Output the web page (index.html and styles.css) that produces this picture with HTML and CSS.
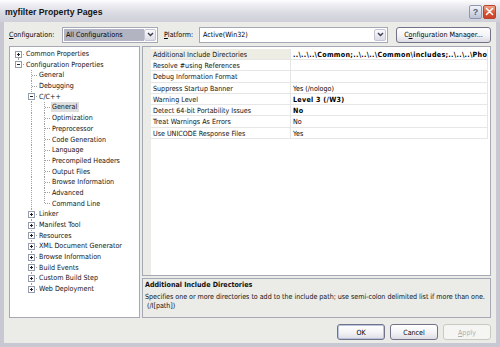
FILE: index.html
```html
<!DOCTYPE html>
<html lang="en">
<head>
    <meta charset="UTF-8">
    <title>myfilter Property Pages</title>
    <link rel="stylesheet" href="styles.css">
</head>
<body>
    <div class="window">
        <div class="titlebar">
            <span class="title">myfilter Property Pages</span>
            <span class="cap help">?</span>
            <span class="cap close">
                <svg width="9" height="9" viewBox="0 0 9 9"><path d="M1.5 1.5 L7.5 7.5 M7.5 1.5 L1.5 7.5" stroke="#fff" stroke-width="1.6" stroke-linecap="round"/></svg>
            </span>
        </div>

        <div class="body">
            <div class="toolbar">
                <span class="lbl"><u>C</u>onfiguration:</span>
                <div class="combo cfg">
                    <span class="text">All Configurations</span>
                    <span class="drop"><svg width="7" height="5" viewBox="0 0 7 5"><path d="M1 1 L3.5 3.5 L6 1" fill="none" stroke="#3c3c50" stroke-width="1.4"/></svg></span>
                </div>
                <span class="lbl plat"><u>P</u>latform:</span>
                <div class="combo platform">
                    <span class="text">Active(Win32)</span>
                    <span class="drop"><svg width="7" height="5" viewBox="0 0 7 5"><path d="M1 1 L3.5 3.5 L6 1" fill="none" stroke="#3c3c50" stroke-width="1.4"/></svg></span>
                </div>
                <button class="btn mgr">C<u>o</u>nfiguration Manager...</button>
            </div>

            <div class="main">
                <!-- tree of property pages -->
                <div class="tree">
                    <div class="row"><span class="node first"><span class="exp plus"></span></span><span class="label">Common Properties</span></div>
                    <div class="row"><span class="node last"><span class="exp minus"></span></span><span class="label">Configuration Properties</span></div>
                    <div class="row"><span class="gap"></span><span class="node"></span><span class="label">General</span></div>
                    <div class="row"><span class="gap"></span><span class="node"></span><span class="label">Debugging</span></div>
                    <div class="row"><span class="gap"></span><span class="node"><span class="exp minus"></span></span><span class="label">C/C++</span></div>
                    <div class="row"><span class="gap"></span><span class="pipe"></span><span class="node"></span><span class="label selected">General</span></div>
                    <div class="row"><span class="gap"></span><span class="pipe"></span><span class="node"></span><span class="label">Optimization</span></div>
                    <div class="row"><span class="gap"></span><span class="pipe"></span><span class="node"></span><span class="label">Preprocessor</span></div>
                    <div class="row"><span class="gap"></span><span class="pipe"></span><span class="node"></span><span class="label">Code Generation</span></div>
                    <div class="row"><span class="gap"></span><span class="pipe"></span><span class="node"></span><span class="label">Language</span></div>
                    <div class="row"><span class="gap"></span><span class="pipe"></span><span class="node"></span><span class="label">Precompiled Headers</span></div>
                    <div class="row"><span class="gap"></span><span class="pipe"></span><span class="node"></span><span class="label">Output Files</span></div>
                    <div class="row"><span class="gap"></span><span class="pipe"></span><span class="node"></span><span class="label">Browse Information</span></div>
                    <div class="row"><span class="gap"></span><span class="pipe"></span><span class="node"></span><span class="label">Advanced</span></div>
                    <div class="row"><span class="gap"></span><span class="pipe"></span><span class="node last"></span><span class="label">Command Line</span></div>
                    <div class="row"><span class="gap"></span><span class="node"><span class="exp plus"></span></span><span class="label">Linker</span></div>
                    <div class="row"><span class="gap"></span><span class="node"><span class="exp plus"></span></span><span class="label">Manifest Tool</span></div>
                    <div class="row"><span class="gap"></span><span class="node"><span class="exp plus"></span></span><span class="label">Resources</span></div>
                    <div class="row"><span class="gap"></span><span class="node"><span class="exp plus"></span></span><span class="label">XML Document Generator</span></div>
                    <div class="row"><span class="gap"></span><span class="node"><span class="exp plus"></span></span><span class="label">Browse Information</span></div>
                    <div class="row"><span class="gap"></span><span class="node"><span class="exp plus"></span></span><span class="label">Build Events</span></div>
                    <div class="row"><span class="gap"></span><span class="node"><span class="exp plus"></span></span><span class="label">Custom Build Step</span></div>
                    <div class="row"><span class="gap"></span><span class="node last"><span class="exp plus"></span></span><span class="label">Web Deployment</span></div>
                </div>

                <div class="right">
                    <!-- property grid -->
                    <div class="grid">
                        <div class="gutter"></div>
                        <div class="props">
                            <div class="prop"><span class="name active">Additional Include Directories</span><span class="val bold">..\..\..\Common;..\..\..\Common\includes;..\..\..\Pho</span></div>
                            <div class="prop"><span class="name">Resolve #using References</span><span class="val"></span></div>
                            <div class="prop"><span class="name">Debug Information Format</span><span class="val"></span></div>
                            <div class="prop"><span class="name">Suppress Startup Banner</span><span class="val">Yes (/nologo)</span></div>
                            <div class="prop"><span class="name">Warning Level</span><span class="val bold">Level 3 (/W3)</span></div>
                            <div class="prop"><span class="name">Detect 64-bit Portability Issues</span><span class="val bold">No</span></div>
                            <div class="prop"><span class="name">Treat Warnings As Errors</span><span class="val">No</span></div>
                            <div class="prop"><span class="name">Use UNICODE Response Files</span><span class="val">Yes</span></div>
                        </div>
                    </div>

                    <div class="desc">
                        <div class="desc-title">Additional Include Directories</div>
                        <div class="desc-text">Specifies one or more directories to add to the include path; use semi-colon delimited list if more than one.<br>&nbsp;(/I[path])</div>
                    </div>
                </div>
            </div>

            <div class="footer">
                <button class="btn default">OK</button>
                <button class="btn">Cancel</button>
                <button class="btn" disabled><u>A</u>pply</button>
            </div>
        </div>
    </div>
</body>
</html>
```

FILE: styles.css
```css
:root {
    --face: #ebebe8;
    --frame: #c8c8d3;
    --edge: #a5a9b5;
    --line: #a0a0a0;
    --grid-line: #e6e6e6;
}

* {
    box-sizing: border-box;
}

body {
    margin: 0;
    font-family: "DejaVu Sans Condensed", "Liberation Sans", sans-serif;
    font-size: 7.1px;
    color: #000;
    background: #fff;
}

.window {
    width: 500px;
    height: 347px;
    display: flex;
    flex-direction: column;
    background: var(--frame);
}

/* title bar */
.titlebar {
    height: 22px;
    display: flex;
    align-items: center;
    padding: 1px 4px 0 5px;
    background: linear-gradient(#fdfdfe, #ececf1 25%, #dadae2 60%, #cfcfd9);
}

.title {
    flex: 1;
    font-family: "Liberation Sans", Arial, sans-serif;
    font-weight: bold;
    font-size: 8.7px;
    color: #151515;
}

.cap {
    width: 13px;
    height: 14px;
    border-radius: 2px;
    display: flex;
    align-items: center;
    justify-content: center;
}

.help {
    margin-right: 1px;
    border: 1px solid #8f97ad;
    background: linear-gradient(#f2f4f9, #bcc3d6);
    font-family: "Liberation Sans", Arial, sans-serif;
    font-weight: bold;
    font-size: 9px;
    color: #565d74;
}

.close {
    border: 1px solid #b8442a;
    background: linear-gradient(#f1a58c, #d9502f 60%, #c9432a);
}

/* dialog body */
.body {
    flex: 1;
    margin: 0 4px 4px;
    padding: 4px 5px 0;
    background: var(--face);
    display: flex;
    flex-direction: column;
}

.toolbar {
    height: 17px;
    display: flex;
    align-items: center;
}

.lbl {
    width: 53px;
}

.lbl.plat {
    margin-left: 6px;
    width: 35px;
}

.combo {
    height: 16px;
    display: flex;
    padding: 1px;
    border: 1px solid var(--edge);
    background: #fff;
}

.combo.cfg {
    width: 96px;
}

.combo.platform {
    width: 189px;
}

.combo .text {
    flex: 1;
    display: flex;
    align-items: center;
    padding-left: 2px;
}

.combo.cfg .text {
    background: #b2b4c2;
}

.drop {
    width: 12px;
    display: flex;
    align-items: center;
    justify-content: center;
    border: 1px solid #c3c5d3;
    border-radius: 2px;
    background: linear-gradient(#fbfbfc, #dcdce5);
}

.btn {
    font: inherit;
    color: #000;
    padding: 0;
    border: 1px solid #727388;
    border-radius: 3px;
    background: linear-gradient(#ffffff, #f3f3f6 55%, #dcdce4);
}

.btn.mgr {
    margin-left: auto;
    width: 95px;
    height: 16px;
}

.btn.default {
    box-shadow: inset 0 0 0 1px #b9c4df;
}

.btn:disabled {
    color: #aeaeae;
    border-color: #cac9c0;
    background: #f5f5f3;
}

/* main area */
.main {
    height: 272px;
    margin-top: 3px;
    display: flex;
    gap: 2px;
}

.tree {
    width: 131px;
    padding: 1.7px 0 0 2px;
    border: 1px solid var(--edge);
    background: #fff;
}

.row {
    height: 10.7px;
    display: flex;
    align-items: center;
    white-space: nowrap;
}

.gap {
    width: 13px;
}

.pipe,
.node {
    width: 13px;
    align-self: stretch;
    background: repeating-linear-gradient(to bottom, var(--line) 0 1px, transparent 1px 2px) 6px 0 / 1px 100% no-repeat;
}

.node {
    display: grid;
}

.node.last {
    background-size: 1px 50%;
}

.node.first {
    background-position: 6px 100%;
    background-size: 1px 50%;
}

.node::after {
    content: '';
    grid-area: 1 / 1;
    align-self: center;
    justify-self: end;
    width: 6px;
    height: 1px;
    background: repeating-linear-gradient(to right, var(--line) 0 1px, transparent 1px 2px);
}

.exp {
    grid-area: 1 / 1;
    z-index: 1;
    align-self: center;
    justify-self: start;
    margin-left: 3px;
    width: 7px;
    height: 7px;
    border: 1px solid #959dad;
}

.exp.minus {
    background: linear-gradient(#222, #222) center / 3px 1px no-repeat, #fff;
}

.exp.plus {
    background: linear-gradient(#222, #222) center / 3px 1px no-repeat,
        linear-gradient(#222, #222) center / 1px 3px no-repeat, #fff;
}

.label {
    padding: 0 2px 0 1px;
    line-height: 10px;
    color: #111;
}

.label.selected {
    background: #dedede;
}

/* property grid */
.right {
    width: 349px;
    display: flex;
    flex-direction: column;
    gap: 2px;
}

.grid {
    height: 230px;
    display: flex;
    border: 1px solid var(--edge);
    background: #fff;
}

.gutter {
    width: 8px;
    background: var(--face);
}

.props {
    flex: 1;
    padding: 1.7px 2px 0 0;
    min-width: 0;
}

.prop {
    height: 11.3px;
    display: flex;
    border-bottom: 1px solid var(--grid-line);
    white-space: nowrap;
}

.name {
    width: 140px;
    padding: 1px 0 0 2px;
    border-right: 1px solid var(--grid-line);
    color: #111;
}

.name.active {
    background: #eeede3;
}

.val {
    flex: 1;
    min-width: 0;
    overflow: hidden;
    padding: 1px 0 0 2px;
    border-right: 1px solid var(--grid-line);
}

.bold {
    font-weight: bold;
    letter-spacing: 0.3px;
}

.desc {
    flex: 1;
    padding: 1px 2px;
    border: 1px solid var(--edge);
    line-height: 9px;
    color: #111;
}

.desc-title {
    font-weight: bold;
    margin-bottom: 2px;
    line-height: 9.5px;
}

.desc-text {
    letter-spacing: -0.03px;
    white-space: nowrap;
}

/* buttons */
.footer {
    height: 16px;
    margin-top: 6px;
    display: flex;
    justify-content: flex-end;
    gap: 5px;
}

.footer .btn {
    width: 48px;
}
```
